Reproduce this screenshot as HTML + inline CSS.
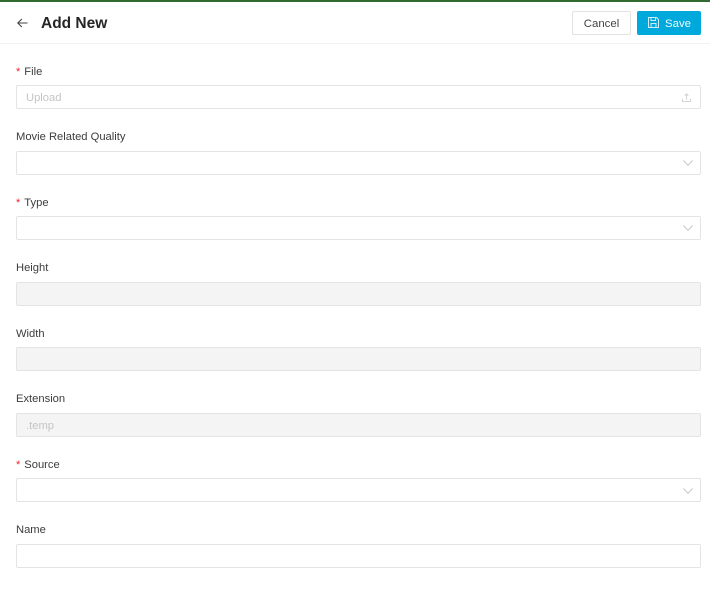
<!DOCTYPE html>
<html><head><meta charset="utf-8">
<style>
*{box-sizing:border-box}
html,body{margin:0;padding:0;width:710px;height:600px;overflow:hidden;background:#fff;font-family:"Liberation Sans",sans-serif;color:#333}
.top{position:absolute;left:0;top:0;width:710px;height:2px;background:#2f6b33}
.hd{position:absolute;left:0;top:43px;width:710px;height:1px;background:#f2f2f2}
.title{position:absolute;left:41px;top:13px;font-size:15.5px;line-height:21px;font-weight:bold;color:#262626}
.btn{position:absolute;top:11px;height:24px;font-size:11.4px;text-align:center;border-radius:2px}
.c{left:572px;width:59px;border:1px solid #e2e2e2;line-height:24px;color:#444;background:#fff}
.s{left:637px;width:64px;background:#00a9dc;color:#f2fbfe;line-height:26px;padding-left:18px}
.l{position:absolute;left:16px;font-size:11.2px;line-height:14px;color:#3c3c3c;white-space:nowrap}
.l i{color:#f5222d;font-style:normal;font-size:11px;margin-right:4px}
.f{position:absolute;left:16px;width:685px;height:24px;border:1px solid #e4e4e4;border-radius:2px;background:#fff;font-size:11.2px;line-height:24px;padding-left:9px;color:#c4c4c4}
.d{background:#f4f4f4}
svg{position:absolute;overflow:visible}
</style></head><body>
<div class="top"></div>
<svg style="left:17px;top:18px" width="11" height="10" viewBox="0 0 11 10" fill="none" stroke="#444" stroke-width="1.100"><path d="M10.500 5H.8M4.800 1L.8 5l4 4"/></svg>
<div class="title">Add New</div>
<div class="btn c">Cancel</div>
<div class="btn s">Save</div>
<svg style="left:648px;top:17px" width="11" height="11" viewBox="0 0 11 11" fill="none" stroke="#cdeef8" stroke-width="1"><path d="M.5.5h8l2 2v8H.5zM3 .5v3h4.500v-3M3 10.500V6.500h5v4"/></svg>
<div class="hd"></div>

<div class="l" style="top:65px"><i>*</i>File</div>
<div class="f" style="top:85px">Upload</div>
<svg style="left:682px;top:93px" width="9" height="9" viewBox="0 0 10 10" fill="none" stroke="#cfcfcf" stroke-width="1"><path d="M.5 6.500v3h9v-3M5 7.500V1M3 3l2-2 2 2"/></svg>

<div class="l" style="top:130px">Movie Related Quality</div>
<div class="f" style="top:151px"></div>
<svg style="left:683px;top:160px" width="10" height="6" viewBox="0 0 10 6" fill="none" stroke="#c8c8c8" stroke-width="1"><path d="M.5.500L5 5.500 9.500.500"/></svg>

<div class="l" style="top:196px"><i>*</i>Type</div>
<div class="f" style="top:216px"></div>
<svg style="left:683px;top:225px" width="10" height="6" viewBox="0 0 10 6" fill="none" stroke="#c8c8c8" stroke-width="1"><path d="M.5.500L5 5.500 9.500.500"/></svg>

<div class="l" style="top:261px">Height</div>
<div class="f d" style="top:282px"></div>

<div class="l" style="top:327px">Width</div>
<div class="f d" style="top:347px"></div>

<div class="l" style="top:392px">Extension</div>
<div class="f d" style="top:413px">.temp</div>

<div class="l" style="top:458px"><i>*</i>Source</div>
<div class="f" style="top:478px"></div>
<svg style="left:683px;top:488px" width="10" height="6" viewBox="0 0 10 6" fill="none" stroke="#c8c8c8" stroke-width="1"><path d="M.5.500L5 5.500 9.500.500"/></svg>

<div class="l" style="top:523px">Name</div>
<div class="f" style="top:544px"></div>
</body></html>
